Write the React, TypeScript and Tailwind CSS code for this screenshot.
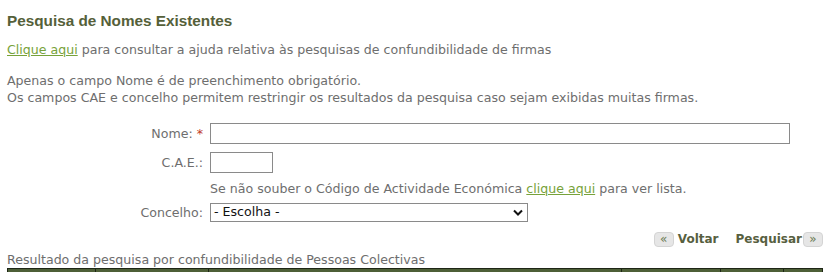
import React from "react";

const body = { fontFamily: '"DejaVu Sans", Verdana, sans-serif' };

function ArrowBox({ dir }: { dir: "l" | "r" }) {
  return (
    <span className="inline-flex items-center justify-center w-[20px] h-[15px] rounded-[4px] bg-[#e6e6e6] border border-[#d4d4d4] text-[#6b7b52] text-[12px] font-normal leading-none pb-[1px]">
      {dir === "l" ? "«" : "»"}
    </span>
  );
}

export default function App() {
  return (
    <div className="w-[832px] h-[272px] overflow-hidden bg-white text-[12.6px] text-[#6e6e6e]" style={body}>
      <div className="pl-[7px] pr-[9px]">
        <h1
          className="pt-[11px] text-[15.3px] font-bold text-[#556039] leading-[19px]"
          style={{ fontFamily: '"Liberation Sans", Arial, sans-serif' }}
        >
          Pesquisa de Nomes Existentes
        </h1>
        <p className="mt-[11px] leading-[17px]">
          <a className="underline text-[#77a23a]">Clique aqui</a> para consultar a ajuda relativa às pesquisas de confundibilidade de firmas
        </p>
        <p className="mt-[14px] leading-[17px]">
          Apenas o campo Nome é de preenchimento obrigatório.
          <br />
          Os campos CAE e concelho permitem restringir os resultados da pesquisa caso sejam exibidas muitas firmas.
        </p>
        <div className="mt-[17px] grid grid-cols-[196px_1fr] gap-x-[7px] items-center">
          <div className="text-right leading-[21px]">
            Nome: <span className="text-[#c0392b]">*</span>
          </div>
          <div className="h-[21px] w-[580px] border border-[#8a8a8a] bg-white" />
          <div className="text-right mt-[8px] leading-[21px]">C.A.E.:</div>
          <div className="mt-[8px] h-[21px] w-[63px] border border-[#8a8a8a] bg-white" />
          <div />
          <div className="mt-[7px] leading-[17px]">
            Se não souber o Código de Actividade Económica <a className="underline text-[#77a23a]">clique aqui</a> para ver lista.
          </div>
          <div className="text-right mt-[6px] leading-[19px]">Concelho:</div>
          <div className="mt-[6px] h-[19px] w-[318px] border border-[#8a8a8a] bg-white flex items-center justify-between pl-[3px] pr-[4px]">
            <span className="text-[#111]">- Escolha -</span>
            <svg width="10" height="7" viewBox="0 0 10 7">
              <path d="M1 1.5 L5 5.5 L9 1.5" fill="none" stroke="#111" strokeWidth="2" />
            </svg>
          </div>
        </div>
        <div className="mt-[9px] flex justify-end items-center text-[12px] font-bold text-[#57603f] leading-[16px]">
          <span className="flex items-center gap-[4px]">
            <ArrowBox dir="l" />
            Voltar
          </span>
          <span className="ml-[17px] flex items-center gap-[1px]">
            Pesquisar
            <ArrowBox dir="r" />
          </span>
        </div>
        <div className="mt-[6px] leading-[14px]">Resultado da pesquisa por confundibilidade de Pessoas Colectivas</div>
        <div className="mt-[1px] w-[816px] h-[20px] border border-[#1e2616] bg-[#4d5f37] grid grid-cols-[88px_113px_413px_99px_63px_1fr]">
          <div className="border-r border-[#1e2616]" />
          <div className="border-r border-[#1e2616]" />
          <div className="border-r border-[#1e2616]" />
          <div className="border-r border-[#1e2616]" />
          <div className="border-r border-[#1e2616]" />
          <div />
        </div>
      </div>
    </div>
  );
}
